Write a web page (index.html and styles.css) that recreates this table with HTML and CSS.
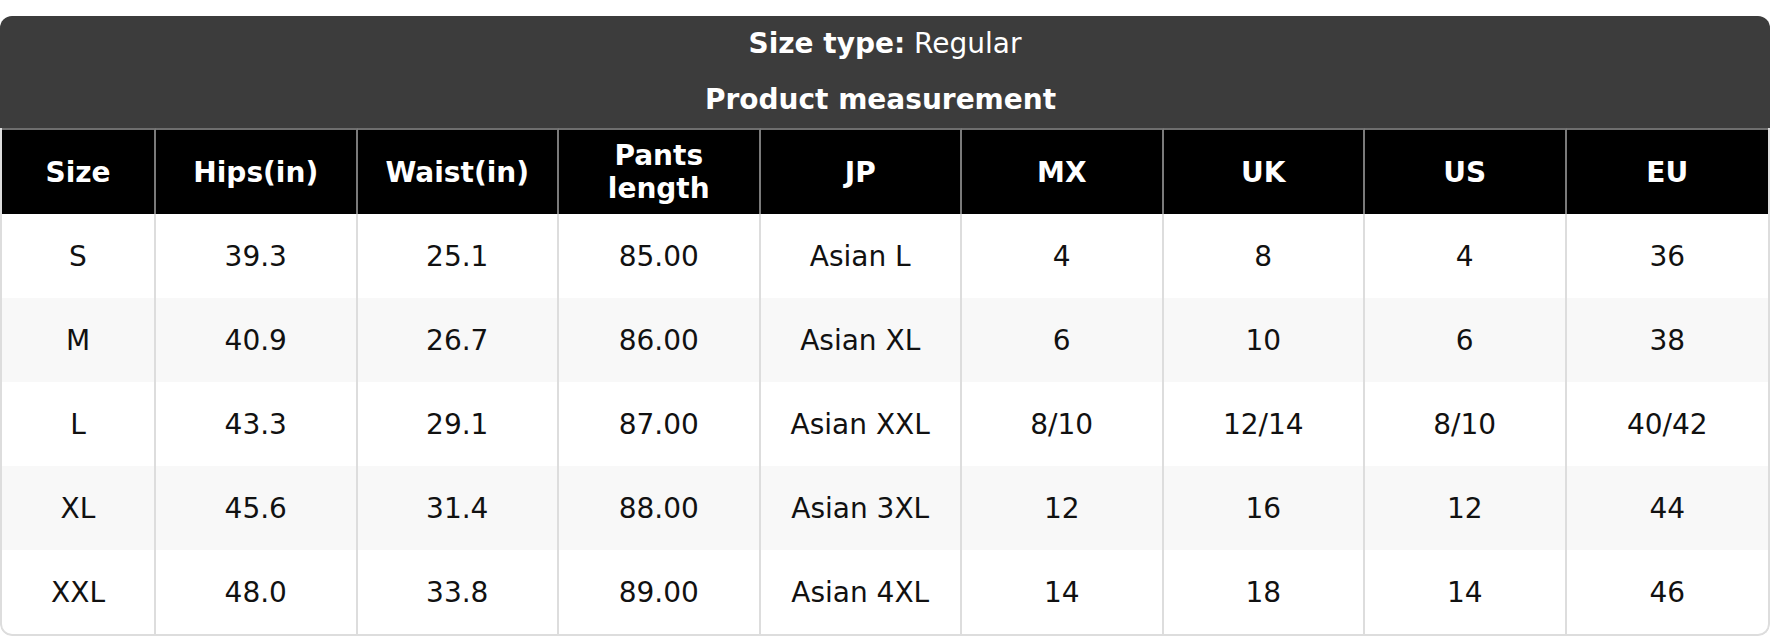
FILE: index.html
```html
<!DOCTYPE html>
<html>
<head>
<meta charset="utf-8">
<link rel="stylesheet" href="styles.css">
</head>
<body>
<div class="card">
  <div class="card-head">
    <div class="line"><span class="label">Size type:</span> Regular</div>
    <div class="line label subtitle">Product measurement</div>
  </div>
  <table class="chart">
    <colgroup>
      <col class="col-first">
      <col><col><col><col><col><col><col><col>
    </colgroup>
    <thead>
      <tr>
        <th>Size</th><th>Hips(in)</th><th>Waist(in)</th><th>Pants<br>length</th><th>JP</th><th>MX</th><th>UK</th><th>US</th><th>EU</th>
      </tr>
    </thead>
    <tbody>
      <tr><td>S</td><td>39.3</td><td>25.1</td><td>85.00</td><td>Asian L</td><td>4</td><td>8</td><td>4</td><td>36</td></tr>
      <tr><td>M</td><td>40.9</td><td>26.7</td><td>86.00</td><td>Asian XL</td><td>6</td><td>10</td><td>6</td><td>38</td></tr>
      <tr><td>L</td><td>43.3</td><td>29.1</td><td>87.00</td><td>Asian XXL</td><td>8/10</td><td>12/14</td><td>8/10</td><td>40/42</td></tr>
      <tr><td>XL</td><td>45.6</td><td>31.4</td><td>88.00</td><td>Asian 3XL</td><td>12</td><td>16</td><td>12</td><td>44</td></tr>
      <tr><td>XXL</td><td>48.0</td><td>33.8</td><td>89.00</td><td>Asian 4XL</td><td>14</td><td>18</td><td>14</td><td>46</td></tr>
    </tbody>
  </table>
</div>
</body>
</html>
```
FILE: styles.css
```css
html, body {
  margin: 0;
  padding: 0;
  background: #ffffff;
}

body {
  font-family: "DejaVu Sans", "Liberation Sans", sans-serif;
  font-size: 28px;
  color: #111111;
}

.card {
  margin-top: 16px;
  width: 1770px;
  border-radius: 12px;
  overflow: hidden;
  background: #ffffff;
}

.card-head {
  background: #3c3c3c;
  color: #ffffff;
  text-align: center;
}

.line {
  height: 56px;
  line-height: 56px;
}

.subtitle {
  padding-right: 9px;
  line-height: 55px;
}

.label {
  font-weight: bold;
}

.chart {
  width: 1770px;
  table-layout: fixed;
  border-collapse: separate;
  border-spacing: 0;
  border: 2px solid #dddddd;
  border-top: 0;
  border-radius: 0 0 12px 12px;
}

.col-first {
  width: 154px;
}

.chart th {
  background: #000000;
  color: #ffffff;
  font-weight: bold;
  height: 84px;
  padding: 0;
  line-height: 33px;
  border-top: 2px solid #6e6e6e;
  border-right: 2px solid #7a7a7a;
  text-align: center;
  vertical-align: middle;
}

.chart td {
  height: 84px;
  padding: 0;
  text-align: center;
  vertical-align: middle;
  border-right: 2px solid #dddddd;
}

.chart th:last-child,
.chart td:last-child {
  border-right: 0;
}

.chart tbody tr:nth-child(even) td {
  background: #f8f8f8;
}
```
